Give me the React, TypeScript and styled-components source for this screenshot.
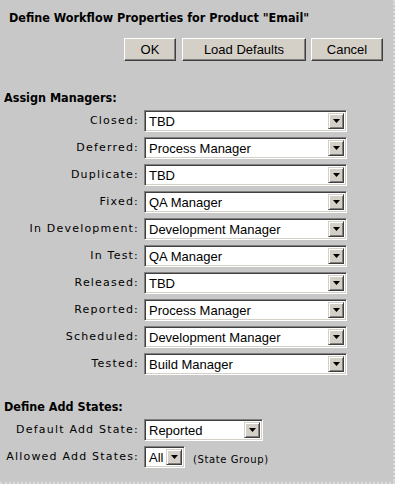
import styled, { createGlobalStyle } from "styled-components";

const GlobalStyle = createGlobalStyle`
  html, body {
    margin: 0;
    padding: 0;
    background: #c8c8c8;
  }
`;

const Page = styled.div`
  width: 395px;
  height: 484px;
  box-sizing: border-box;
  padding: 10px 10px 0 4px;
  border-right: 2px dotted #dcdcdc;
  border-bottom: 2px dotted #dcdcdc;
  background: #c8c8c8;
  font-family: "DejaVu Sans", Verdana, sans-serif;
  color: #000;
`;

const Title = styled.h1`
  margin: 0 0 0 5px;
  font-family: "DejaVu Sans Condensed", "DejaVu Sans", sans-serif;
  font-weight: bold;
  font-size: 12.5px;
  line-height: 16px;
`;

const ButtonBar = styled.div`
  display: flex;
  justify-content: flex-end;
  gap: 6px;
  margin-top: 12px;
`;

const Button = styled.button<{ $width: number }>`
  width: ${(p) => p.$width}px;
  height: 23px;
  padding: 0;
  background: #d4d0c8;
  font-family: "Liberation Sans", Arial, sans-serif;
  font-size: 13px;
  color: #000;
  border: 1px solid;
  border-color: #fff #404040 #404040 #fff;
  box-shadow: inset -1px -1px 0 #808080;

  & + & + & {
    margin-left: -1px;
  }
`;

const Section = styled.h2`
  margin: 0;
  font-family: "DejaVu Sans Condensed", "DejaVu Sans", sans-serif;
  font-weight: bold;
  font-size: 12.5px;
  line-height: 16px;
`;

const FormGrid = styled.div`
  display: grid;
  grid-template-columns: 135px auto;
  column-gap: 5px;
  row-gap: 5px;
  align-items: center;
  justify-items: start;
  margin-top: 4px;
`;

const Label = styled.label`
  justify-self: end;
  font-size: 11px;
  letter-spacing: 1.2px;
  line-height: 14px;
  white-space: nowrap;
`;

const SelectBox = styled.div<{ $width: number }>`
  width: ${(p) => p.$width}px;
  height: 22px;
  box-sizing: border-box;
  display: flex;
  align-items: stretch;
  background: #fff;
  border: 1px solid;
  border-color: #808080 #fff #fff #808080;
  box-shadow: inset 1px 1px 0 #404040, inset -1px -1px 0 #d4d0c8;
  padding: 2px;
`;

const SelectValue = styled.span`
  flex: 1;
  display: flex;
  align-items: center;
  padding-left: 2px;
  font-family: "Liberation Sans", Arial, sans-serif;
  font-size: 13px;
  white-space: nowrap;
  overflow: hidden;
`;

const ArrowButton = styled.span`
  width: 16px;
  box-sizing: border-box;
  display: flex;
  align-items: center;
  justify-content: center;
  background: #d4d0c8;
  border: 1px solid;
  border-color: #d4d0c8 #404040 #404040 #d4d0c8;
  box-shadow: inset 1px 1px 0 #fff, inset -1px -1px 0 #808080;
`;

const InlineRow = styled.div`
  display: flex;
  align-items: center;
  gap: 8px;
`;

const Hint = styled.span`
  font-size: 10px;
  letter-spacing: 0.6px;
  margin-top: 4px;
`;

const Spacer = styled.div<{ $h: number }>`
  height: ${(p) => p.$h}px;
`;

const Select = ({ value, width }: { value: string; width: number }) => (
  <SelectBox $width={width}>
    <SelectValue>{value}</SelectValue>
    <ArrowButton>
      <svg width="7" height="4" viewBox="0 0 7 4">
        <path d="M0 0h7L3.5 4z" fill="#000" />
      </svg>
    </ArrowButton>
  </SelectBox>
);

const managers: [string, string][] = [
  ["Closed", "TBD"],
  ["Deferred", "Process Manager"],
  ["Duplicate", "TBD"],
  ["Fixed", "QA Manager"],
  ["In Development", "Development Manager"],
  ["In Test", "QA Manager"],
  ["Released", "TBD"],
  ["Reported", "Process Manager"],
  ["Scheduled", "Development Manager"],
  ["Tested", "Build Manager"],
];

export default function App() {
  return (
    <>
      <GlobalStyle />
      <Page>
        <Title>Define Workflow Properties for Product "Email"</Title>
        <ButtonBar>
          <Button $width={52}>OK</Button>
          <Button $width={124}>Load Defaults</Button>
          <Button $width={72}>Cancel</Button>
        </ButtonBar>
        <Spacer $h={29} />
        <Section>Assign Managers:</Section>
        <FormGrid>
          {managers.map(([state, manager]) => [
            <Label key={state + "-l"}>{state}:</Label>,
            <Select key={state + "-s"} value={manager} width={203} />,
          ])}
        </FormGrid>
        <Spacer $h={24} />
        <Section>Define Add States:</Section>
        <FormGrid>
          <Label>Default Add State:</Label>
          <Select value="Reported" width={119} />
          <Label>Allowed Add States:</Label>
          <InlineRow>
            <Select value="All" width={41} />
            <Hint>(State Group)</Hint>
          </InlineRow>
        </FormGrid>
      </Page>
    </>
  );
}
